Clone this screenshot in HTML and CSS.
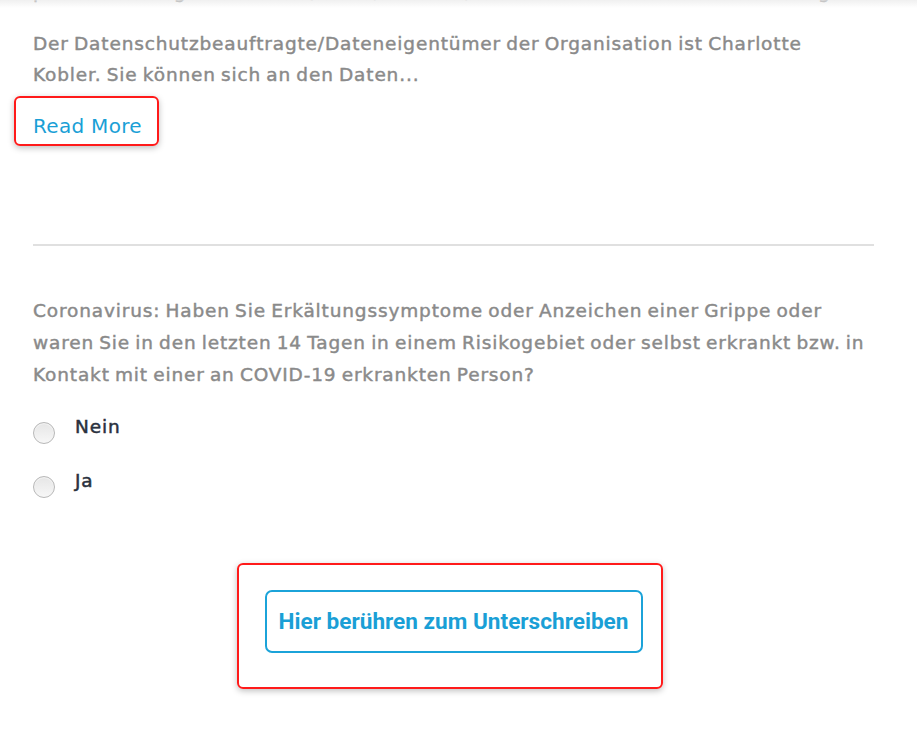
FILE: index.html
```html
<!DOCTYPE html>
<html lang="de">
<head>
<meta charset="utf-8">
<title>Formular</title>
<link rel="stylesheet" href="styles.css">
</head>
<body>
<div class="top-shade"></div>
<main class="content">
  <p class="text prev">personenbezogenen Daten (Name, Adresse) werden ausschließlich zur Erfüllung verwendet</p>
  <p class="text desc">Der Datenschutzbeauftragte/Dateneigentümer der Organisation ist Charlotte Kobler. Sie können sich an den Daten...</p>
  <div class="hl hl-read">
    <a class="read-more" href="#">Read More</a>
  </div>
  <hr class="divider">
  <p class="text question">Coronavirus: Haben Sie Erkältungssymptome oder Anzeichen einer Grippe oder waren Sie in den letzten 14 Tagen in einem Risikogebiet oder selbst erkrankt bzw. in Kontakt mit einer an COVID-19 erkrankten Person?</p>
  <div class="options">
    <label class="option"><span class="radio"></span><span class="opt-label">Nein</span></label>
    <label class="option"><span class="radio"></span><span class="opt-label">Ja</span></label>
  </div>
  <div class="sign-row">
    <div class="hl hl-sign">
      <button class="sign-btn" type="button">Hier berühren zum Unterschreiben</button>
    </div>
  </div>
</main>
</body>
</html>
```
FILE: styles.css
```css
html, body {
  margin: 0;
  padding: 0;
  background: #ffffff;
  overflow: hidden;
}
body {
  width: 917px;
  height: 736px;
  position: relative;
}
.top-shade {
  position: absolute;
  left: 0;
  top: 0;
  width: 100%;
  height: 8px;
  background: linear-gradient(to bottom, rgba(235,235,235,0.75), rgba(255,255,255,0));
  pointer-events: none;
}
.content {
  padding: 0 43px 0 33px;
  display: flex;
  flex-direction: column;
}
.text {
  margin: 0;
  font-family: "DejaVu Sans", sans-serif;
  font-weight: 400;
  font-size: 18.5px;
  letter-spacing: 0.85px;
  word-spacing: -1.5px;
  -webkit-text-stroke: 0.45px #8a8a8a;
  color: #8a8a8a;
  line-height: 31px;
}
.prev {
  margin-top: -24px;
  white-space: nowrap;
  overflow: hidden;
}
.desc {
  margin-top: 21px;
}
.hl {
  border: 2px solid #ff1a1a;
  border-radius: 6px;
  box-shadow: 0 2px 6px rgba(0,0,0,0.25);
  box-sizing: border-box;
}
.hl-read {
  align-self: flex-start;
  margin: 6px 0 0 -19px;
  width: 145px;
  height: 50px;
  padding: 15px 0 0 17px;
}
.read-more {
  font-family: "DejaVu Sans", sans-serif;
  font-size: 20px;
  letter-spacing: 0.3px;
  line-height: 26px;
  color: #1a9fd6;
  text-decoration: none;
  white-space: nowrap;
}
.divider {
  margin: 98px 0 0 0;
  border: 0;
  height: 2px;
  background: #e0e0e0;
}
.question {
  margin-top: 49px;
  line-height: 32px;
}
.options {
  display: flex;
  flex-direction: column;
  gap: 32px;
  margin-top: 28px;
}
.option {
  display: flex;
  align-items: center;
  height: 22px;
}
.radio {
  width: 20px;
  height: 20px;
  border-radius: 50%;
  border: 1px solid #b8b8b8;
  background: linear-gradient(to bottom, #e6e6e6, #f7f7f7);
  box-shadow: inset 0 1px 1px rgba(255,255,255,0.6);
  margin: 6px 20px 0 0;
  flex: none;
}
.opt-label {
  font-family: "DejaVu Sans", sans-serif;
  font-weight: 400;
  font-size: 18.5px;
  letter-spacing: 0.85px;
  -webkit-text-stroke: 0.5px #2a313e;
  color: #2a313e;
  line-height: 22px;
  margin-top: -6px;
}
.sign-row {
  display: flex;
  justify-content: center;
  margin-top: 68px;
}
.hl-sign {
  padding: 25px 18px 34px 26px;
  margin-left: -8px;
}
.sign-btn {
  display: block;
  width: 378px;
  height: 63px;
  background: #ffffff;
  border: 2px solid #1ba3d9;
  border-radius: 7px;
  font-family: Roboto, "Liberation Sans", sans-serif;
  font-weight: 700;
  font-size: 22.6px;
  color: #1a9fd6;
  padding: 0;
  cursor: pointer;
}
```
